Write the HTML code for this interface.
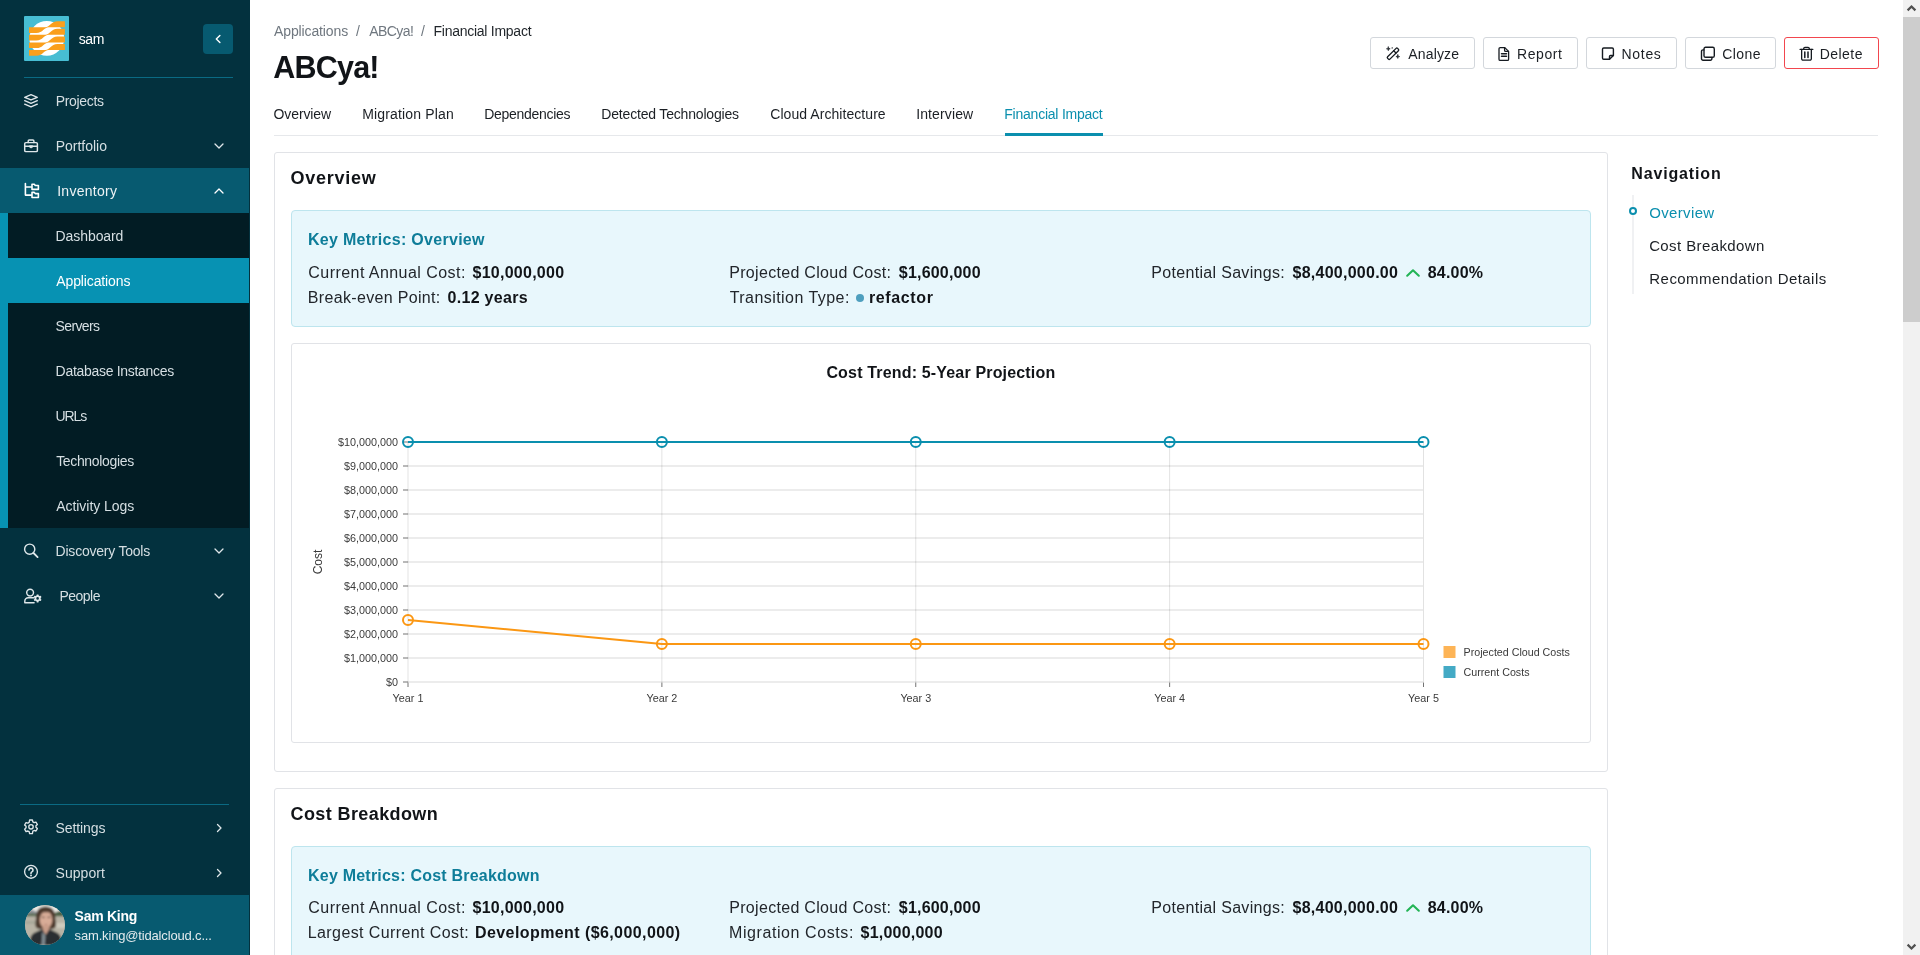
<!DOCTYPE html>
<html lang="en">
<head>
<meta charset="utf-8">
<title>ABCya! - Financial Impact</title>
<style>
*{box-sizing:border-box;margin:0;padding:0}
html,body{width:1920px;height:955px;overflow:hidden;background:#fff}
body{font-family:"Liberation Sans",sans-serif;font-size:14px;color:#22262b;position:relative}
a{color:inherit;text-decoration:none}
ul{list-style:none}
svg{display:block;overflow:visible}
.t{position:absolute;white-space:pre;line-height:20px;font-weight:400}
b.t,h1.t,h2.t,h3.t,h4.t{font-weight:700}
/* ---------- sidebar ---------- */
#sidebar{will-change:transform;position:absolute;left:0;top:0;width:250px;height:955px;background:#03313e;color:#d6dfe3}
#sidebar .brand{position:absolute;left:24px;top:16px;width:209px;height:62px;border-bottom:1px solid #0a6a83}
#sidebar .logo{position:absolute;left:0;top:0;width:45px;height:45px;border-radius:1px;overflow:hidden}
#sidebar .org{color:#fff;font-size:14px}
#sidebar .collapse{position:absolute;left:179px;top:8px;width:30px;height:30px;border-radius:4px;background:#075a70}
.nav li{position:absolute;left:0;width:249px;height:45px;font-size:14px}
.nav li .ico{position:absolute;left:22px;top:14px;width:18px;height:18px;fill:none;stroke:#dfe7ea;stroke-width:1.45;stroke-linecap:round;stroke-linejoin:round}
.nav li .chev{position:absolute;left:213px;top:17px;width:12px;height:12px;fill:none;stroke:#dfe7ea;stroke-width:1.3;stroke-linecap:round;stroke-linejoin:round}
.nav li.open{background:#075a70;color:#eef3f5}
.nav li.open .ico,.nav li.open .chev{stroke:#fff}
.nav li.sub{background:#021c24;border-left:8px solid #0792b3}
.nav li.sub.active{background:#0792b3;color:#fff}
#sidebar .div2{position:absolute;left:20px;top:804px;width:209px;height:1px;background:#0a6a83}
#sidebar .user{position:absolute;left:0;top:895px;width:249px;height:60px;background:#075a70}
#sidebar .user .avatar{position:absolute;left:25px;top:10px;width:40px;height:40px;border-radius:50%;overflow:hidden}
#sidebar .user .name{font-size:14px;color:#fff}
#sidebar .user .mail{font-size:13px;color:#e3eaed}
/* ---------- main ---------- */
#main{will-change:transform;position:absolute;left:250px;top:0;width:1653px;height:955px;background:#fff;overflow:hidden}
.crumbs{position:absolute;left:24px;top:22px;width:400px;height:20px;font-size:14px;color:#6f777f}
.crumbs .cur{color:#1f2429}
h1.title{font-size:30.5px;line-height:40px;color:#111418}
.actions .btn{position:absolute;top:37px;height:32px;border:1px solid #d3d7dc;border-radius:3px;background:#fff;font-size:14px;color:#1b1f24}
.actions .btn.danger{border:1.5px solid #f2464e}
.actions .btn svg{position:absolute;top:8px;width:16px;height:16px;fill:none;stroke:#161b21;stroke-width:1.3;stroke-linecap:round;stroke-linejoin:round}
.tabs{position:absolute;left:24px;top:92px;width:1604px;height:44px;border-bottom:1px solid #e6e8eb;font-size:14px}
.tabs a{color:#1b1f24}
.tabs a.active{color:#0b8fae}
.tabs .bar{position:absolute;left:731px;top:41px;width:98px;height:3px;background:#0b8fae}
.card{position:absolute;left:24px;width:1334px;border:1px solid #e1e3e7;border-radius:3px;background:#fff}
.card h2{font-size:18px;line-height:24px;color:#111418}
.metrics{position:absolute;left:16px;width:1300px;border:1px solid #bde5ee;border-radius:4px;background:#e8f7fc;font-size:16px}
.metrics h3{font-size:16px;color:#0e7d99}
.metrics b{color:#111418}
.metrics .dot{position:absolute;width:8px;height:8px;border-radius:50%;background:#4e9fbe}
.metrics .up{position:absolute;width:16px;height:10px;fill:none;stroke:#22b455;stroke-width:2.1;stroke-linecap:round;stroke-linejoin:round}
.chart{position:absolute;left:16px;width:1300px;border:1px solid #e1e3e7;border-radius:3px;background:#fff}
.chart h5{font-size:16px;color:#111418;font-weight:700}
.chart svg{position:absolute;left:0;top:0}
.chart svg text{font-family:"Liberation Sans",sans-serif;fill:#3a3a3a}
.toc{position:absolute;left:1381px;top:160px;width:250px;height:140px}
.toc h4{font-size:16px;color:#111418}
.toc .rail{position:absolute;left:1px;top:35px;width:2px;height:99px;background:#f0f1f3}
.toc .pin{position:absolute;left:-2px;top:47px;width:8px;height:8px;border-radius:50%;border:2px solid #0b8fae;background:#fff}
.toc li{font-size:15px;color:#1b1f24}
.toc li.active{color:#0b8fae}
#scroll{position:absolute;left:1903px;top:0;width:17px;height:955px;background:#f1f1f1}
#scroll .thumb{position:absolute;left:0;top:17px;width:17px;height:305px;background:#cdcdcd}
#scroll svg{position:absolute;left:0;width:17px;height:17px;fill:none;stroke:#505050;stroke-width:2.2}
</style>
</head>
<body>
<aside id="sidebar">
 <div class="brand">
  <div class="logo"><svg width="45" height="45" viewBox="0 0 45 45"><rect width="45" height="45" fill="#47bdd3"/><circle cx="22.8" cy="22.3" r="17.4" fill="#fff"/><g fill="#fa9f1c"><path d="M5 11.2H21.2C26.2 11.2 26.8 5.2 33.4 5.2H40.9V11.2H24.8C19.8 11.2 19.2 16.9 12.2 16.9H5Z"/><path d="M5 18.8H21.2C26.2 18.8 26.8 12.8 33.4 12.8H40.9V18.8H24.8C19.8 18.8 19.2 24.5 12.2 24.5H5Z"/><path d="M5 26.4H21.2C26.2 26.4 26.8 20.4 33.4 20.4H40.9V26.4H24.8C19.8 26.4 19.2 32.1 12.2 32.1H5Z"/><path d="M5 34H21.2C26.2 34 26.8 28 33.4 28H40.9V34H24.8C19.8 34 19.2 39.7 12.2 39.7H5Z"/></g></svg></div>
  <div class="t org" style="left:54.70px;top:13px;letter-spacing:-0.400px">sam</div>
  <div class="collapse"><svg width="30" height="30" viewBox="0 0 30 30" fill="none" stroke="#fff" stroke-width="1.4" stroke-linecap="round" stroke-linejoin="round"><path d="M16.9 11.4 L13.3 15 L16.9 18.6"/></svg></div>
 </div>
 <ul class="nav">
  <li style="top:78px"><svg class="ico" viewBox="0 0 18 18"><path d="M9 2.700 L15.300 5.300 L9 7.900 L2.700 5.300Z"/><path d="M2.700 8.700 L9 11.300 L15.300 8.700"/><path d="M2.700 12.200 L9 14.800 L15.300 12.200"/></svg><span class="t" style="left:55.70px;top:13px;letter-spacing:-0.314px">Projects</span></li>
  <li style="top:123px"><svg class="ico" viewBox="0 0 18 18"><rect x="2.7" y="5.6" width="12.7" height="9" rx="1.2"/><path d="M6.2 5.6V3.9a1 1 0 0 1 1-1h3.7a1 1 0 0 1 1 1V5.6"/><path d="M2.7 9.2H15.4"/><path d="M7.4 9.2a1.65 1.65 0 0 0 3.3 0Z" fill="#dfe7ea" stroke-width="1"/></svg><span class="t" style="left:55.70px;top:13px;letter-spacing:-0.006px">Portfolio</span><svg class="chev" viewBox="0 0 12 12"><path d="M2 4 L6 8 L10 4"/></svg></li>
  <li class="open" style="top:168px"><svg class="ico" viewBox="0 0 18 18" style="stroke-width:1.6"><path d="M3.4 1.6V13.1H9.4M3.4 5H9.4"/><path d="M10 2.3h2.3l1 1.2h3.1v3.9H10Z"/><path d="M10 10.4h2.3l1 1.2h3.1v3.9H10Z"/></svg><span class="t" style="left:57.15px;top:13px;letter-spacing:0.281px">Inventory</span><svg class="chev" viewBox="0 0 12 12"><path d="M2 8 L6 4 L10 8"/></svg></li>
  <li class="sub" style="top:213px"><span class="t" style="left:47.60px;top:13px;letter-spacing:-0.087px">Dashboard</span></li>
  <li class="sub active" style="top:258px"><span class="t" style="left:48.30px;top:13px;letter-spacing:-0.127px">Applications</span></li>
  <li class="sub" style="top:303px"><span class="t" style="left:47.55px;top:13px;letter-spacing:-0.617px">Servers</span></li>
  <li class="sub" style="top:348px"><span class="t" style="left:47.60px;top:13px;letter-spacing:-0.297px">Database Instances</span></li>
  <li class="sub" style="top:393px"><span class="t" style="left:47.60px;top:13px;letter-spacing:-1.133px">URLs</span></li>
  <li class="sub" style="top:438px"><span class="t" style="left:48.15px;top:13px;letter-spacing:-0.336px">Technologies</span></li>
  <li class="sub" style="top:483px"><span class="t" style="left:48.20px;top:13px;letter-spacing:-0.042px">Activity Logs</span></li>
  <li style="top:528px"><svg class="ico" viewBox="0 0 18 18"><circle cx="7.7" cy="7.2" r="5.1"/><path d="M11.5 11 L15.6 15.1" stroke-width="1.8"/></svg><span class="t" style="left:55.60px;top:13px;letter-spacing:-0.225px">Discovery Tools</span><svg class="chev" viewBox="0 0 12 12"><path d="M2 4 L6 8 L10 4"/></svg></li>
  <li style="top:573px"><svg class="ico" viewBox="0 0 20 18" style="width:20px"><circle cx="8.1" cy="5.6" r="3.4"/><path d="M11.6 10.8H6.2a3.4 3.4 0 0 0-3.4 3.4v1.5h9.3"/><g transform="translate(15.6 11.4)" stroke="none" fill="#dfe7ea"><path fill-rule="evenodd" d="M-.8-4h1.6l.3 1.1.9.5 1.1-.3.8 1.4-.8.8v1l.8.8-.8 1.4-1.1-.3-.9.5-.3 1.1h-1.6l-.3-1.1-.9-.5-1.1.3-.8-1.4.8-.8v-1l-.8-.8.8-1.4 1.1.3.9-.5ZM0-1.3a1.3 1.3 0 1 0 0 2.6 1.3 1.3 0 0 0 0-2.6Z"/></g></svg><span class="t" style="left:59.40px;top:13px;letter-spacing:-0.500px">People</span><svg class="chev" viewBox="0 0 12 12"><path d="M2 4 L6 8 L10 4"/></svg></li>
  <li style="top:805px"><svg class="ico" viewBox="0 0 18 18" style="stroke-width:1.35"><g transform="translate(0 -1)"><circle cx="9" cy="8.8" r="2.2"/><path d="M7.6 2h2.8l.45 1.9 1.25.72 1.87-.56 1.4 2.42-1.42 1.34v1.44l1.42 1.34-1.4 2.42-1.87-.56-1.25.72L10.400 15.600H7.600l-.45-1.900-1.25-.72-1.87.56-1.400-2.420 1.420-1.340V8.340L2.630 7 4.030 4.580l1.870.56 1.250-.72Z"/></g></svg><span class="t" style="left:55.55px;top:13px;letter-spacing:-0.107px">Settings</span><svg class="chev" viewBox="0 0 12 12"><path d="M4.5 2.5 L8 6 L4.5 9.5"/></svg></li>
  <li style="top:850px"><svg class="ico" viewBox="0 0 18 18" style="stroke-width:1.35"><g transform="translate(0 -1)"><circle cx="9" cy="8.8" r="6.4"/><path d="M7 7.100a2 2 0 1 1 2.900 1.800c-.6.300-.9.700-.9 1.300v.3" stroke-width="1.6"/><circle cx="9" cy="12.500" r=".95" fill="#dfe7ea" stroke="none"/></g></svg><span class="t" style="left:55.55px;top:13px;letter-spacing:0.042px">Support</span><svg class="chev" viewBox="0 0 12 12"><path d="M4.5 2.5 L8 6 L4.5 9.5"/></svg></li>
 </ul>
 <div class="div2"></div>
 <div class="user">
  <div class="avatar"><svg width="40" height="40" viewBox="0 0 40 40"><defs><filter id="bl" x="-10%" y="-10%" width="120%" height="120%"><feGaussianBlur stdDeviation=".9"/></filter></defs><rect width="40" height="40" fill="#bdb8aa"/><g filter="url(#bl)"><rect width="40" height="7" fill="#ecebe6"/><path d="M0 12V6l6-2 6 3v5Z" fill="#8e939a"/><path d="M0 11.500h13v-2l-5-1.500-8 1Z" fill="#5d6f55"/><path d="M29 11.500h11V7l-4-1.500-5 1.500Z" fill="#4b6144"/><rect y="11.500" width="40" height="28.500" fill="#b9b4a6"/><path d="M0 16h12v3H0Z" fill="#a8a89a"/><path d="M28 18h12v5H28Z" fill="#cfcbbd"/><path d="M20.500 1.500c-6 0-9.500 4-9.500 10 0 4-1 7-.5 9.500.5 2 2.500 3 4.500 3h11c2.500 0 4.500-1 5-3 .5-2.500-.7-5.500-.7-9.500 0-6-3.800-10-9.800-10Z" fill="#4e3a2d"/><ellipse cx="21" cy="14.700" rx="6.300" ry="8.600" fill="#d8ac97"/><path d="M17.500 21h7v8h-7Z" fill="#c99c88"/><path d="M14.700 7.500c2-2.500 4-3.500 6.300-3.500s4.500 1 6.300 3.500l.4 5c-1-2.500-2-4-3-5-2-.3-5-.3-7 0-1 1-2 2.500-3 5Z" fill="#4e3a2d"/><path d="M5 40c-.5-6 1-11 5-12.500l7.500-3.500 3 6 4-6 7 3.500c4 1.500 5.500 6.500 5 12.500Z" fill="#2b2e33"/><path d="M17.300 26.500l3.200 4.500-.8 9h-3.200Z" fill="#7f8b92"/><path d="M16.800 12.300h2.800M22.600 12.300h2.800" stroke="#4a3a35" stroke-width="1"/><path d="M19.200 19.600h3.600" stroke="#b07c70" stroke-width=".9"/></g></svg></div>
  <b class="t name" style="left:74.60px;top:11px;letter-spacing:-0.264px">Sam King</b>
  <span class="t mail" style="left:74.60px;top:31px;letter-spacing:-0.165px">sam.king@tidalcloud.c...</span>
 </div>
</aside>
<main id="main">
 <nav class="crumbs">
  <a class="t" style="left:0px;top:-1px;letter-spacing:-0.118px">Applications</a>
  <span class="t" style="left:81.90px;top:-1px">/</span>
  <a class="t" style="left:95.30px;top:-1px;letter-spacing:-0.590px">ABCya!</a>
  <span class="t" style="left:146.90px;top:-1px">/</span>
  <span class="t cur" style="left:159.50px;top:-1px;letter-spacing:-0.260px">Financial Impact</span>
 </nav>
 <h1 class="t title" style="left:23.25px;top:47px;letter-spacing:-0.780px;line-height:40px">ABCya!</h1>
 <div class="actions">
  <a class="btn" style="left:1120px;width:105px"><svg style="left:14px;top:8px" viewBox="0 0 16 16"><g transform="rotate(-45 8 7.750)"><rect x=".95" y="6.100" width="14.100" height="3.300" rx="1.050"/><path d="M10.600 6.100V9.400"/></g><g fill="#161b21" stroke="none"><path d="M3.300 .9Q3.300 2.800 5.200 2.800 3.300 2.800 3.300 4.700 3.300 2.800 1.400 2.800 3.300 2.800 3.300 .9Z" stroke="#161b21" stroke-width=".6"/><path d="M12.800 8.700Q12.800 10.600 14.700 10.600 12.800 10.600 12.800 12.500 12.800 10.600 10.900 10.600 12.800 10.600 12.800 8.700Z" stroke="#161b21" stroke-width=".6"/><circle cx="7.200" cy="1.900" r=".7"/></g></svg><span class="t" style="left:37.30px;top:6px;letter-spacing:0.142px">Analyze</span></a>
  <a class="btn" style="left:1233px;width:95px"><svg style="left:12px;top:8px" viewBox="0 0 16 16"><path d="M4.200 1.600h4.600l3.800 3.800v7.800a1.200 1.200 0 0 1-1.200 1.200H4.200A1.200 1.200 0 0 1 3 13.200V2.800a1.200 1.200 0 0 1 1.200-1.200Z"/><path d="M8.600 1.800v2.600a1 1 0 0 0 1 1h2.800"/><path d="M5.500 7.700h5M5.500 10.300h5" stroke-width="1.500"/></svg><span class="t" style="left:33px;top:6px;letter-spacing:0.580px">Report</span></a>
  <a class="btn" style="left:1336px;width:91px"><svg style="left:13px;top:8px;stroke-width:1.4" viewBox="0 0 16 16"><path d="M3.700 2h8.500a1.200 1.200 0 0 1 1.200 1.200v6.300l-3.900 3.800H3.700a1.200 1.200 0 0 1-1.200-1.200V3.200A1.200 1.200 0 0 1 3.700 2Z"/><path d="M9.500 13.200v-2.700a1 1 0 0 1 1-1h2.800"/></svg><span class="t" style="left:34.50px;top:6px;letter-spacing:0.700px">Notes</span></a>
  <a class="btn" style="left:1435px;width:91px"><svg style="left:14px;top:8px;stroke-width:1.4" viewBox="0 0 16 16"><rect x="4" y="1.300" width="10.300" height="10" rx="1.600"/><path d="M3.900 3.900H3a1.500 1.500 0 0 0-1.500 1.500v7.300A1.500 1.500 0 0 0 3 14.200h7.400a1.500 1.500 0 0 0 1.500-1.500v-1.300"/></svg><span class="t" style="left:36.25px;top:6px;letter-spacing:0.438px">Clone</span></a>
  <a class="btn danger" style="left:1534px;width:95px"><svg style="left:12.5px;top:7.5px" viewBox="0 0 16 16"><path d="M2.100 3.400h12.700"/><path d="M5.700 3.400V2.600a1.300 1.300 0 0 1 1.300-1.300h3a1.300 1.300 0 0 1 1.300 1.300v.8"/><path d="M3.650 3.500v9.300a1.400 1.400 0 0 0 1.400 1.400h6.900a1.400 1.400 0 0 0 1.400-1.400V3.500"/><path d="M6.800 6v5.500M10 6v5.500" stroke-width="1.500"/></svg><span class="t" style="left:34.70px;top:5.50px;letter-spacing:0.460px">Delete</span></a>
 </div>
 <nav class="tabs">
  <a class="t" style="left:-0.45px;top:12px;letter-spacing:-0.114px">Overview</a>
  <a class="t" style="left:88.30px;top:12px;letter-spacing:0.146px">Migration Plan</a>
  <a class="t" style="left:210.30px;top:12px;letter-spacing:-0.300px">Dependencies</a>
  <a class="t" style="left:327.30px;top:12px;letter-spacing:-0.180px">Detected Technologies</a>
  <a class="t" style="left:496.25px;top:12px;letter-spacing:0.059px">Cloud Architecture</a>
  <a class="t" style="left:642.15px;top:12px;letter-spacing:0.131px">Interview</a>
  <a class="t active" style="left:730.30px;top:12px;letter-spacing:-0.233px">Financial Impact</a>
  <i class="bar"></i>
 </nav>
 <section class="card" style="top:152px;height:620px">
  <h2 class="t" style="left:15.55px;top:13px;letter-spacing:0.736px;line-height:24px">Overview</h2>
  <div class="metrics" style="top:57px;height:117px">
   <h3 class="t" style="left:16px;top:19px;letter-spacing:0.287px">Key Metrics: Overview</h3>
   <span class="t" style="left:16.35px;top:52px;letter-spacing:0.445px">Current Annual Cost:</span>
   <b class="t" style="left:180.55px;top:52px;letter-spacing:0.250px">$10,000,000</b>
   <span class="t" style="left:15.85px;top:77px;letter-spacing:0.325px">Break-even Point:</span>
   <b class="t" style="left:155.50px;top:77px;letter-spacing:0.306px">0.12 years</b>
   <span class="t" style="left:437.25px;top:52px;letter-spacing:0.305px">Projected Cloud Cost:</span>
   <b class="t" style="left:606.85px;top:52px;letter-spacing:0.183px">$1,600,000</b>
   <span class="t" style="left:437.65px;top:77px;letter-spacing:0.450px">Transition Type:</span>
   <i class="dot" style="left:564px;top:83px"></i>
   <b class="t" style="left:576.90px;top:77px;letter-spacing:0.643px">refactor</b>
   <span class="t" style="left:859.35px;top:52px;letter-spacing:0.312px">Potential Savings:</span>
   <b class="t" style="left:1000.55px;top:52px;letter-spacing:0.250px">$8,400,000.00</b>
   <svg class="up" style="left:1112.65px;top:57.30px" viewBox="0 0 16 10"><path d="M2.2 7.700 L8 2.300 L13.800 7.700"/></svg>
   <b class="t" style="left:1135.70px;top:52px;letter-spacing:0.220px">84.00%</b>
  </div>
  <div class="chart" style="top:190px;height:400px">
   <h5 class="t" style="left:534.40px;top:19px;letter-spacing:0.170px">Cost Trend: 5-Year Projection</h5>
   <svg width="1298" height="398" viewBox="292 344 1298 398">
    <path d="M408 682H1423M408 658H1423M408 634H1423M408 610H1423M408 586H1423M408 562H1423M408 538H1423M408 514H1423M408 490H1423M408 466H1423M408 442H1423" stroke="#000" stroke-opacity=".15" stroke-width="1" fill="none"/>
    <path d="M408 442V682M661.875 442V682M915.75 442V682M1169.625 442V682M1423.5 442V682" stroke="#000" stroke-opacity=".115" stroke-width="1" fill="none"/>
    <path d="M403 682H408M403 658H408M403 634H408M403 610H408M403 586H408M403 562H408M403 538H408M403 514H408M403 490H408M403 466H408M403 442H408M408 682.5V687M661.875 682.5V687M915.75 682.5V687M1169.625 682.5V687M1423.5 682.5V687" stroke="#000" stroke-opacity=".55" stroke-width="1" fill="none"/>
    <path d="M408 442H1423.5" stroke="#0a8fae" stroke-width="2" fill="none"/>
    <path d="M408 619.9 L661.875 643.9 L915.75 643.9 L1169.625 643.9 L1423.5 643.9" stroke="#fb9713" stroke-width="2" fill="none" stroke-linejoin="round"/>
    <g fill="none" stroke="#fb9713" stroke-width="2"><circle cx="408" cy="619.9" r="5"/><circle cx="661.875" cy="643.9" r="5"/><circle cx="915.75" cy="643.9" r="5"/><circle cx="1169.625" cy="643.9" r="5"/><circle cx="1423.5" cy="643.9" r="5"/></g>
    <g fill="none" stroke="#0a8fae" stroke-width="2"><circle cx="408" cy="442" r="5"/><circle cx="661.875" cy="442" r="5"/><circle cx="915.75" cy="442" r="5"/><circle cx="1169.625" cy="442" r="5"/><circle cx="1423.5" cy="442" r="5"/></g>
    <g font-size="10.8" text-anchor="end">
     <text x="398" y="685.8">$0</text>
     <text x="398" y="661.8">$1,000,000</text>
     <text x="398" y="637.8">$2,000,000</text>
     <text x="398" y="613.8">$3,000,000</text>
     <text x="398" y="589.8">$4,000,000</text>
     <text x="398" y="565.8">$5,000,000</text>
     <text x="398" y="541.8">$6,000,000</text>
     <text x="398" y="517.8">$7,000,000</text>
     <text x="398" y="493.8">$8,000,000</text>
     <text x="398" y="469.8">$9,000,000</text>
     <text x="398" y="445.8">$10,000,000</text>
    </g>
    <g font-size="10.8" text-anchor="middle">
     <text x="408.0" y="701.8">Year 1</text>
     <text x="661.9" y="701.8">Year 2</text>
     <text x="915.8" y="701.8">Year 3</text>
     <text x="1169.6" y="701.8">Year 4</text>
     <text x="1423.5" y="701.8">Year 5</text>
    </g>
    <text x="322" y="562" font-size="12" text-anchor="middle" transform="rotate(-90 322 562)">Cost</text>
    <rect x="1443.5" y="646" width="12" height="12" fill="#fdb456"/><rect x="1443.5" y="666" width="12" height="12" fill="#44aac5"/>
    <g font-size="10.7" style="fill:#666"><text x="1463.6" y="655.7">Projected Cloud Costs</text><text x="1463.6" y="675.7">Current Costs</text></g>
   </svg>
  </div>
 </section>
 <section class="card" style="top:788px;height:400px">
  <h2 class="t" style="left:15.55px;top:13px;letter-spacing:0.396px;line-height:24px">Cost Breakdown</h2>
  <div class="metrics" style="top:57px;height:300px">
   <h3 class="t" style="left:16px;top:19px;letter-spacing:0.219px">Key Metrics: Cost Breakdown</h3>
   <span class="t" style="left:16.35px;top:51px;letter-spacing:0.445px">Current Annual Cost:</span>
   <b class="t" style="left:180.55px;top:51px;letter-spacing:0.250px">$10,000,000</b>
   <span class="t" style="left:15.75px;top:76px;letter-spacing:0.403px">Largest Current Cost:</span>
   <b class="t" style="left:183px;top:76px;letter-spacing:0.415px">Development ($6,000,000)</b>
   <span class="t" style="left:437.25px;top:51px;letter-spacing:0.305px">Projected Cloud Cost:</span>
   <b class="t" style="left:606.85px;top:51px;letter-spacing:0.183px">$1,600,000</b>
   <span class="t" style="left:437.05px;top:76px;letter-spacing:0.580px">Migration Costs:</span>
   <b class="t" style="left:568.55px;top:76px;letter-spacing:0.217px">$1,000,000</b>
   <span class="t" style="left:859.35px;top:51px;letter-spacing:0.312px">Potential Savings:</span>
   <b class="t" style="left:1000.55px;top:51px;letter-spacing:0.250px">$8,400,000.00</b>
   <svg class="up" style="left:1112.65px;top:56.30px" viewBox="0 0 16 10"><path d="M2.2 7.700 L8 2.300 L13.800 7.700"/></svg>
   <b class="t" style="left:1135.70px;top:51px;letter-spacing:0.220px">84.00%</b>
  </div>
 </section>
 <aside class="toc">
  <h4 class="t" style="left:0.30px;top:4px;letter-spacing:0.850px">Navigation</h4>
  <i class="rail"></i><i class="pin"></i>
  <ul>
   <li class="t active" style="left:18.15px;top:43px;letter-spacing:0.364px">Overview</li>
   <li class="t" style="left:18.15px;top:76px;letter-spacing:0.396px">Cost Breakdown</li>
   <li class="t" style="left:18.35px;top:109px;letter-spacing:0.440px">Recommendation Details</li>
  </ul>
 </aside>
</main>
<div id="scroll"><svg style="top:0" viewBox="0 0 17 17"><path d="M4.6 10.4 L8.5 6.5 L12.4 10.4"/></svg><div class="thumb"></div><svg style="top:938px" viewBox="0 0 17 17"><path d="M4.6 6.6 L8.5 10.5 L12.4 6.6"/></svg></div>
</body>
</html>
